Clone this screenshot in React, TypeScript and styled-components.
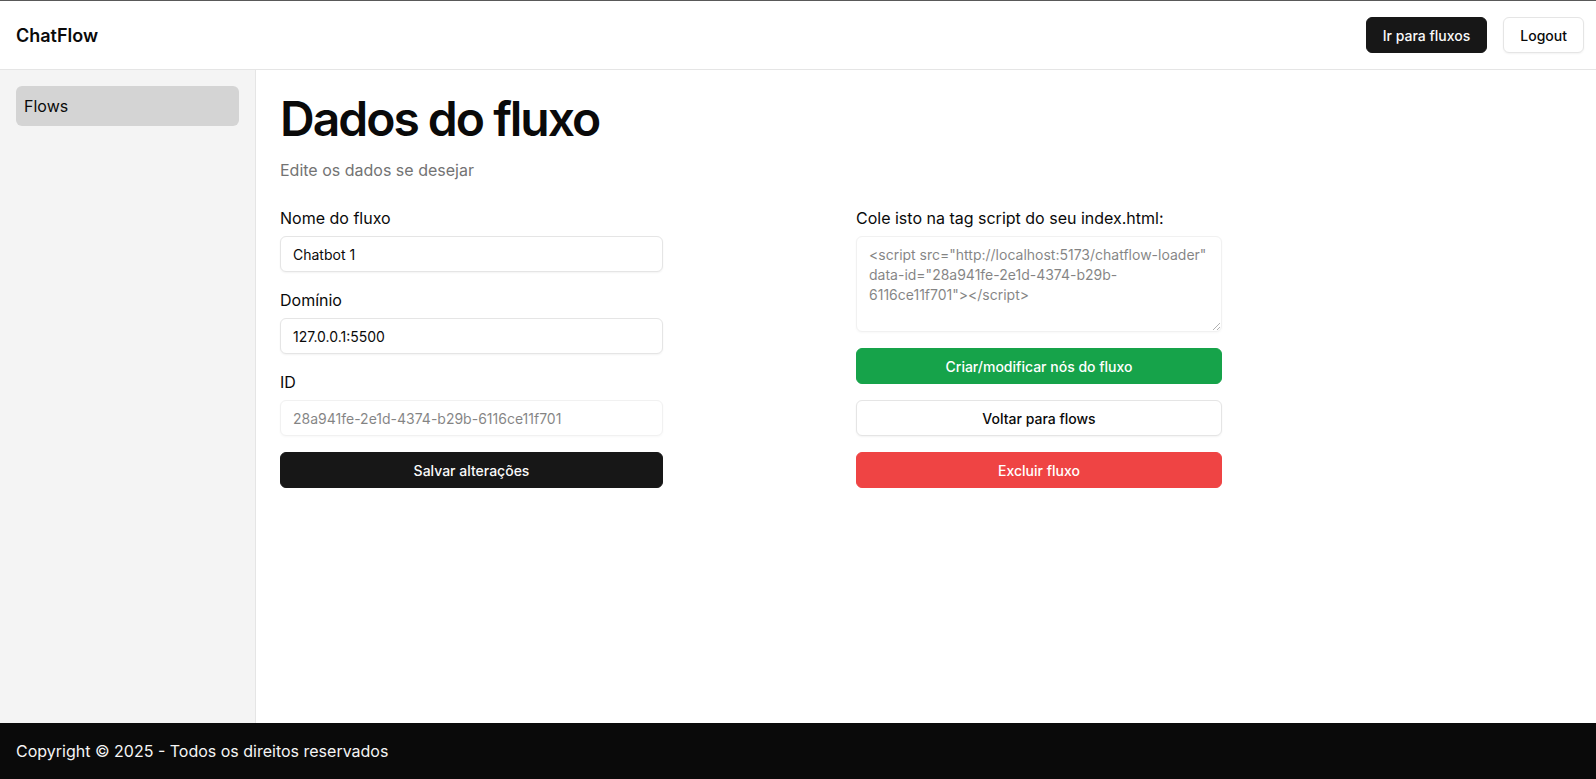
import React from "react";
import styled, { createGlobalStyle, css } from "styled-components";

const GlobalStyle = createGlobalStyle`
  * { box-sizing: border-box; }
  html, body { margin: 0; padding: 0; }
  body {
    font-family: Inter, "Noto Sans", Arial, sans-serif;
    color: #0a0a0a;
    background: #ffffff;
  }
`;

const Page = styled.div`
  min-height: 100vh;
  display: flex;
  flex-direction: column;
`;

const Header = styled.header`
  height: 70px;
  border-top: 1px solid #595959;
  border-bottom: 1px solid #e5e5e5;
  display: flex;
  align-items: center;
  justify-content: space-between;
  padding: 0 12px 0 16px;
  background: #ffffff;
`;

const Brand = styled.div`
  font-size: 18px;
  font-weight: 600;
  color: #0a0a0a;
`;

const HeaderActions = styled.div`
  display: flex;
  gap: 16px;
`;

type Variant = "dark" | "outline" | "green" | "red";

const variantStyles: Record<Variant, ReturnType<typeof css>> = {
  dark: css`
    background: #171717;
    color: #fafafa;
    border: 1px solid #171717;
  `,
  outline: css`
    background: #ffffff;
    color: #0a0a0a;
    border: 1px solid #e5e5e5;
    box-shadow: 0 1px 2px rgba(0, 0, 0, 0.05);
  `,
  green: css`
    background: #16a34a;
    color: #ffffff;
    border: 1px solid #16a34a;
  `,
  red: css`
    background: #ef4444;
    color: #ffffff;
    border: 1px solid #ef4444;
  `,
};

const Button = styled.button<{ $variant: Variant; $full?: boolean }>`
  height: 36px;
  padding: 0 16px;
  border-radius: 6px;
  font-family: Inter, "Noto Sans", Arial, sans-serif;
  font-size: 14px;
  font-weight: 500;
  cursor: pointer;
  display: inline-flex;
  align-items: center;
  justify-content: center;
  width: ${(p) => (p.$full ? "100%" : "auto")};
  ${(p) => variantStyles[p.$variant]}
`;

const Body = styled.div`
  flex: 1;
  display: flex;
`;

const Sidebar = styled.aside`
  width: 256px;
  background: #f4f4f4;
  border-right: 1px solid #e5e5e5;
  padding: 16px 16px;
`;

const NavItem = styled.div<{ $active?: boolean }>`
  height: 40px;
  width: 223px;
  display: flex;
  align-items: center;
  padding: 0 8px;
  border-radius: 6px;
  font-size: 16px;
  color: #0a0a0a;
  background: ${(p) => (p.$active ? "#d4d4d4" : "transparent")};
`;

const Main = styled.main`
  flex: 1;
  padding: 25px 24px 24px 24px;
`;

const Title = styled.h1`
  margin: 0;
  font-size: 48px;
  line-height: 48px;
  font-weight: 600;
  letter-spacing: -2px;
  color: #0a0a0a;
`;

const Subtitle = styled.p`
  margin: 15px 0 0 0;
  font-size: 16px;
  line-height: 24px;
  color: #737373;
`;

const FormGrid = styled.div`
  margin-top: 24px;
  display: grid;
  grid-template-columns: 383px 366px;
  column-gap: 193px;
  align-items: start;
`;

const Column = styled.div`
  display: flex;
  flex-direction: column;
  gap: 16px;
`;

const Field = styled.div`
  display: flex;
  flex-direction: column;
  gap: 6px;
`;

const Label = styled.label`
  font-size: 16px;
  line-height: 24px;
  color: #0a0a0a;
`;

const fieldBase = css`
  width: 100%;
  border: 1px solid #e5e5e5;
  border-radius: 6px;
  padding: 0 12px;
  font-family: Inter, "Noto Sans", Arial, sans-serif;
  font-size: 14px;
  color: #0a0a0a;
  background: #ffffff;
  box-shadow: 0 1px 2px rgba(0, 0, 0, 0.05);
  outline: none;
  &:disabled {
    opacity: 0.5;
  }
`;

const Input = styled.input`
  ${fieldBase}
  height: 36px;
`;

const TextArea = styled.textarea`
  ${fieldBase}
  height: 96px;
  padding: 8px 12px;
  line-height: 20px;
  resize: vertical;
  display: block;
`;

const scriptText =
  '<script src="http://localhost:5173/chatflow-loader" data-id="28a941fe-2e1d-4374-b29b-6116ce11f701"></script>';

const Footer = styled.footer`
  height: 56px;
  background: #0a0a0a;
  color: #f5f5f5;
  display: flex;
  align-items: center;
  padding: 0 16px;
  font-size: 16px;
`;

export default function App() {
  return (
    <>
      <GlobalStyle />
      <Page>
        <Header>
          <Brand>ChatFlow</Brand>
          <HeaderActions>
            <Button $variant="dark">Ir para fluxos</Button>
            <Button $variant="outline">Logout</Button>
          </HeaderActions>
        </Header>
        <Body>
          <Sidebar>
            <NavItem $active>Flows</NavItem>
          </Sidebar>
          <Main>
            <Title>Dados do fluxo</Title>
            <Subtitle>Edite os dados se desejar</Subtitle>
            <FormGrid>
              <Column>
                <Field>
                  <Label>Nome do fluxo</Label>
                  <Input defaultValue="Chatbot 1" />
                </Field>
                <Field>
                  <Label>Domínio</Label>
                  <Input defaultValue="127.0.0.1:5500" />
                </Field>
                <Field>
                  <Label>ID</Label>
                  <Input disabled defaultValue="28a941fe-2e1d-4374-b29b-6116ce11f701" />
                </Field>
                <Button $variant="dark" $full>
                  Salvar alterações
                </Button>
              </Column>
              <Column>
                <Field>
                  <Label>Cole isto na tag script do seu index.html:</Label>
                  <TextArea disabled defaultValue={scriptText} />
                </Field>
                <Button $variant="green" $full>
                  Criar/modificar nós do fluxo
                </Button>
                <Button $variant="outline" $full>
                  Voltar para flows
                </Button>
                <Button $variant="red" $full>
                  Excluir fluxo
                </Button>
              </Column>
            </FormGrid>
          </Main>
        </Body>
        <Footer>Copyright © 2025 - Todos os direitos reservados</Footer>
      </Page>
    </>
  );
}
